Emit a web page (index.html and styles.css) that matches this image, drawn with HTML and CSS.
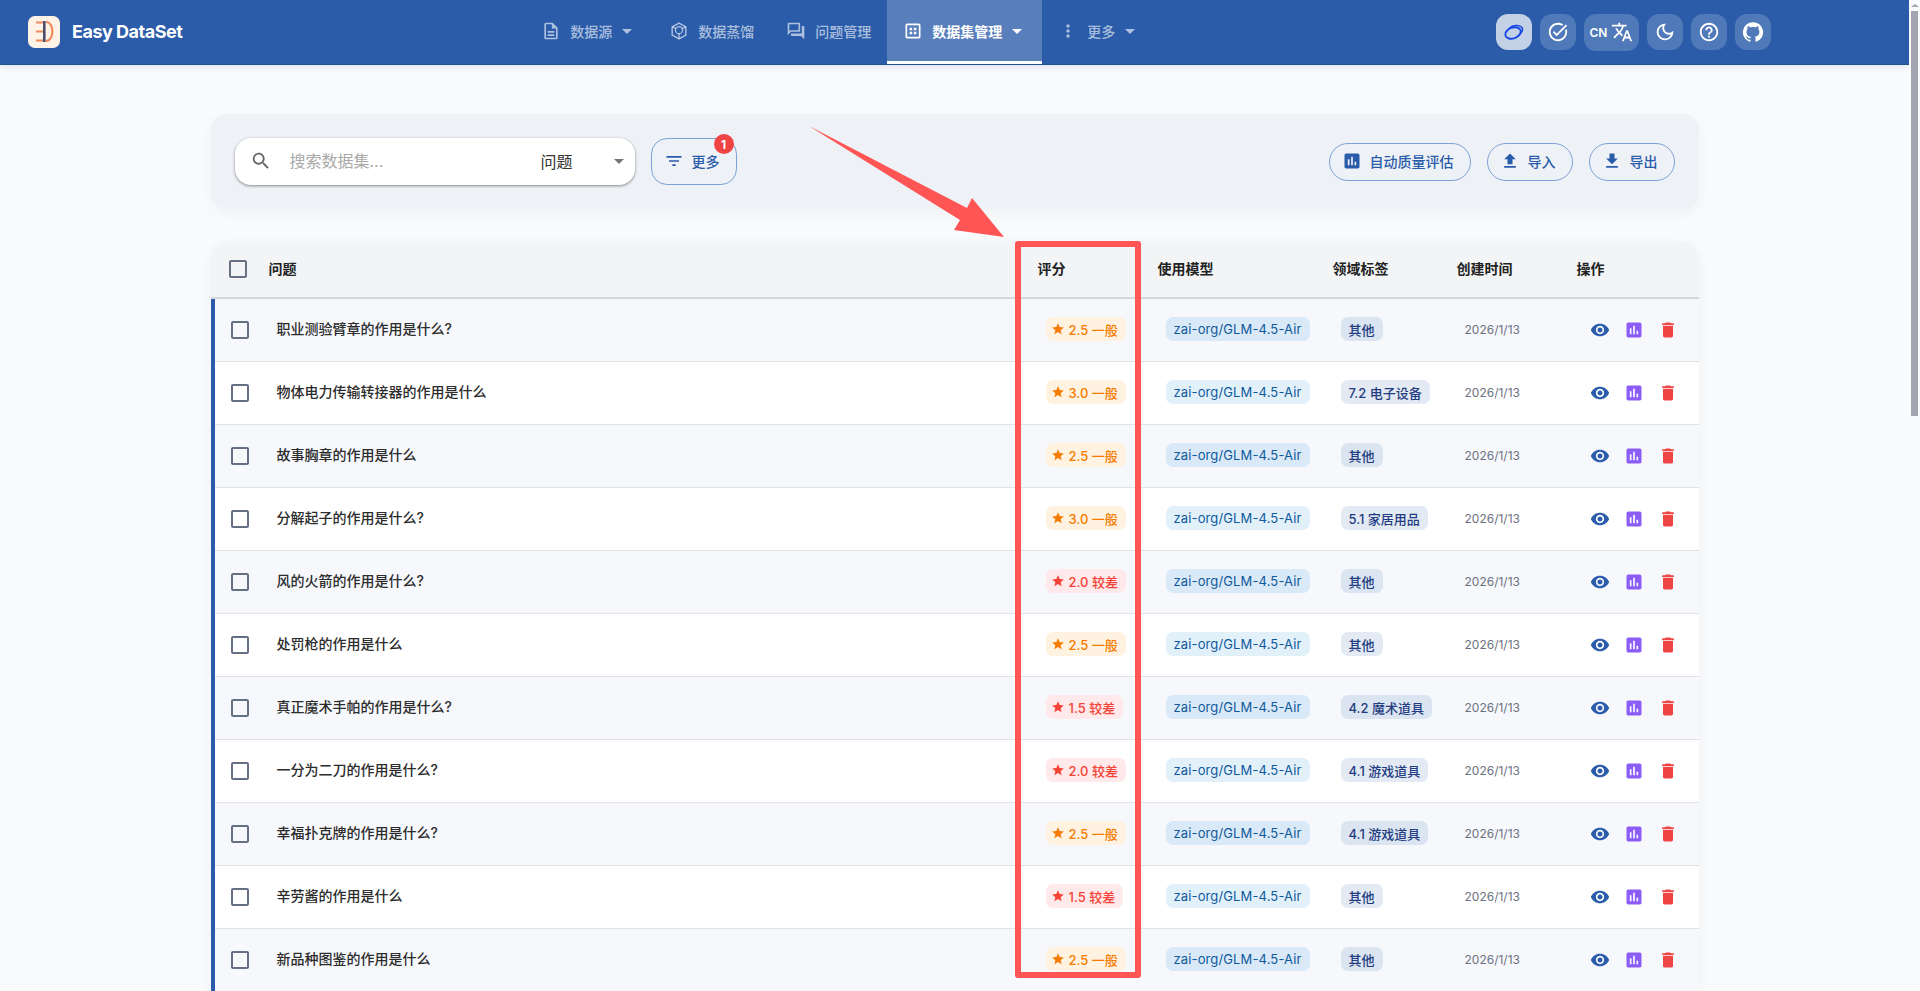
FILE: index.html
```html
<!DOCTYPE html>
<html lang="zh-CN">
<head>
<meta charset="utf-8">
<title>Easy DataSet</title>
<link rel="stylesheet" href="styles.css">
</head>
<body>
<svg class="defs" width="0" height="0" aria-hidden="true">
  <symbol id="i-doc" viewBox="0 0 24 24"><path d="M8 16h8v2H8zm0-4h8v2H8zm6-10H6c-1.1 0-2 .9-2 2v16c0 1.1.89 2 1.99 2H18c1.1 0 2-.9 2-2V8l-6-6zm4 18H6V4h7v5h5v11z"/></symbol>
  <symbol id="i-hex" viewBox="0 0 24 24"><path fill="none" stroke="currentColor" stroke-width="1.7" d="M12 2.5l8.2 4.7v9.6L12 21.5l-8.2-4.7V7.2z"/><circle cx="12" cy="11" r="4.2" fill="none" stroke="currentColor" stroke-width="1.6"/><path fill="none" stroke="currentColor" stroke-width="1.6" d="M12 15v6M8.2 9L4 7M15.8 9L20 7"/></symbol>
  <symbol id="i-qa" viewBox="0 0 24 24"><path d="M15 4v7H5.17L4 12.17V4h11m1-2H3c-.55 0-1 .45-1 1v14l4-4h10c.55 0 1-.45 1-1V3c0-.55-.45-1-1-1zm5 4h-2v9H6v2c0 .55.45 1 1 1h11l4 4V7c0-.55-.45-1-1-1z"/></symbol>
  <symbol id="i-dataset" viewBox="0 0 24 24"><path d="M19 3H5c-1.1 0-2 .9-2 2v14c0 1.1.9 2 2 2h14c1.1 0 2-.9 2-2V5c0-1.1-.9-2-2-2zm0 16H5V5h14v14z"/><path d="M8 8h3v3H8zm5 0h3v3h-3zm-5 5h3v3H8zm5 0h3v3h-3z"/></symbol>
  <symbol id="i-vert" viewBox="0 0 24 24"><path d="M12 8c1.1 0 2-.9 2-2s-.9-2-2-2-2 .9-2 2 .9 2 2 2zm0 2c-1.1 0-2 .9-2 2s.9 2 2 2 2-.9 2-2-.9-2-2-2zm0 6c-1.1 0-2 .9-2 2s.9 2 2 2 2-.9 2-2-.9-2-2-2z"/></symbol>
  <symbol id="i-caret" viewBox="0 0 24 24"><path d="M7 10l5 5 5-5z"/></symbol>
  <symbol id="i-search" viewBox="0 0 24 24"><path d="M15.5 14h-.79l-.28-.27C15.41 12.59 16 11.11 16 9.5 16 5.91 13.09 3 9.5 3S3 5.91 3 9.5 5.91 16 9.5 16c1.61 0 3.09-.59 4.23-1.57l.27.28v.79l5 4.99L20.49 19l-4.99-5zm-6 0C7.01 14 5 11.99 5 9.5S7.01 5 9.5 5 14 7.01 14 9.5 11.99 14 9.5 14z"/></symbol>
  <symbol id="i-filter" viewBox="0 0 24 24"><path d="M10 18h4v-2h-4v2zM3 6v2h18V6H3zm3 7h12v-2H6v2z"/></symbol>
  <symbol id="i-chart" viewBox="0 0 24 24"><path d="M19 3H5c-1.1 0-2 .9-2 2v14c0 1.1.9 2 2 2h14c1.1 0 2-.9 2-2V5c0-1.1-.9-2-2-2zM9 17H7v-7h2v7zm4 0h-2V7h2v10zm4 0h-2v-4h2v4z"/></symbol>
  <symbol id="i-up" viewBox="0 0 24 24"><path d="M9 16h6v-6h4l-7-7-7 7h4zm-4 2h14v2H5z"/></symbol>
  <symbol id="i-down" viewBox="0 0 24 24"><path d="M19 9h-4V3H9v6H5l7 7 7-7zM5 18v2h14v-2H5z"/></symbol>
  <symbol id="i-eye" viewBox="0 0 24 24"><path d="M12 4.5C7 4.5 2.73 7.61 1 12c1.73 4.39 6 7.5 11 7.5s9.27-3.11 11-7.5c-1.73-4.39-6-7.5-11-7.5zM12 17c-2.76 0-5-2.24-5-5s2.24-5 5-5 5 2.24 5 5-2.24 5-5 5zm0-8c-1.66 0-3 1.34-3 3s1.34 3 3 3 3-1.34 3-3-1.34-3-3-3z"/></symbol>
  <symbol id="i-trash" viewBox="0 0 24 24"><path d="M6 19c0 1.1.9 2 2 2h8c1.1 0 2-.9 2-2V7H6v12zM19 4h-3.5l-1-1h-5l-1 1H5v2h14V4z"/></symbol>
  <symbol id="i-star" viewBox="0 0 24 24"><path d="M12 17.27 18.18 21l-1.64-7.03L22 9.24l-7.19-.61L12 2 9.19 8.63 2 9.24l5.46 4.73L5.82 21z"/></symbol>
  <symbol id="i-task" viewBox="0 0 24 24"><path d="M22 5.18 10.59 16.6l-4.24-4.24 1.41-1.41 2.83 2.83 10-10L22 5.18zm-2.21 5.04c.13.57.21 1.17.21 1.78 0 4.42-3.58 8-8 8s-8-3.58-8-8 3.58-8 8-8c1.58 0 3.04.46 4.28 1.25l1.44-1.44C16.1 2.67 14.13 2 12 2 6.48 2 2 6.48 2 12s4.48 10 10 10 10-4.48 10-10c0-1.19-.22-2.33-.6-3.39l-1.61 1.61z"/></symbol>
  <symbol id="i-lang" viewBox="0 0 24 24"><path d="m12.87 15.07-2.54-2.51.03-.03c1.74-1.94 2.98-4.17 3.71-6.53H17V4h-7V2H8v2H1v1.99h11.17C11.5 7.92 10.44 9.75 9 11.35 8.07 10.32 7.3 9.19 6.69 8h-2c.73 1.63 1.73 3.17 2.98 4.56l-5.09 5.02L4 19l5-5 3.11 3.11.76-2.04zM18.5 10h-2L12 22h2l1.12-3h4.75L21 22h2l-4.5-12zm-2.62 7 1.62-4.33L19.12 17h-3.24z"/></symbol>
  <symbol id="i-moon" viewBox="0 0 24 24"><path d="M9.37 5.51c-.18.64-.27 1.31-.27 1.99 0 4.08 3.32 7.4 7.4 7.4.68 0 1.35-.09 1.99-.27C17.45 17.19 14.93 19 12 19c-3.86 0-7-3.14-7-7 0-2.93 1.81-5.45 4.37-6.49zM12 3c-4.97 0-9 4.03-9 9s4.03 9 9 9 9-4.03 9-9c0-.46-.04-.92-.1-1.36-.98 1.37-2.58 2.26-4.4 2.26-2.98 0-5.4-2.42-5.4-5.4 0-1.81.89-3.42 2.26-4.4-.44-.06-.9-.1-1.36-.1z"/></symbol>
  <symbol id="i-help" viewBox="0 0 24 24"><path d="M11 18h2v-2h-2v2zm1-16C6.48 2 2 6.48 2 12s4.48 10 10 10 10-4.48 10-10S17.52 2 12 2zm0 18c-4.41 0-8-3.59-8-8s3.59-8 8-8 8 3.59 8 8-3.59 8-8 8zm0-14c-2.21 0-4 1.79-4 4h2c0-1.1.9-2 2-2s2 .9 2 2c0 2-3 1.75-3 5h2c0-2.25 3-2.5 3-5 0-2.21-1.79-4-4-4z"/></symbol>
  <symbol id="i-github" viewBox="0 0 24 24"><path d="M12 1.27a11 11 0 00-3.48 21.46c.55.09.73-.28.73-.55v-1.84c-3.03.64-3.67-1.46-3.67-1.46-.55-1.29-1.28-1.65-1.28-1.65-.92-.65.1-.65.1-.65 1.1 0 1.73 1.1 1.73 1.1.92 1.65 2.57 1.2 3.21.92a2 2 0 01.64-1.47c-2.47-.27-5.04-1.19-5.04-5.5 0-1.1.46-2.1 1.2-2.84a3.76 3.76 0 010-2.93s.91-.28 3.11 1.1c1.8-.49 3.7-.49 5.5 0 2.1-1.38 3.02-1.1 3.02-1.1a3.76 3.76 0 010 2.93c.83.74 1.2 1.74 1.2 2.94 0 4.21-2.57 5.13-5.04 5.4.45.37.82.92.82 2.02v3.03c0 .27.1.64.73.55A11 11 0 0012 1.27"/></symbol>
  <symbol id="i-box" viewBox="0 0 24 24"><path d="M19 5v14H5V5h14m0-2H5c-1.1 0-2 .9-2 2v14c0 1.1.9 2 2 2h14c1.1 0 2-.9 2-2V5c0-1.1-.9-2-2-2z"/></symbol>
</svg>

<header class="topbar">
  <div class="brand">
    <svg class="logo" viewBox="0 0 32 32" width="32" height="32">
      <rect width="32" height="32" rx="7" fill="#fff3e8"/>
      <path d="M8 6.5h7M8 15.5h7M8 24.5h7" stroke="#f28a5c" stroke-width="2.2" fill="none"/>
      <path d="M18 6c8.5 0 8.5 19 0 19" stroke="#f28a5c" stroke-width="2.2" fill="none"/>
      <rect x="15" y="5" width="2.6" height="21" fill="#4a4f6a"/>
    </svg>
    <span class="brand-name">Easy DataSet</span>
  </div>
  <nav class="nav">
    <a class="nav-item"><svg class="ic20"><use href="#i-doc"/></svg><span>数据源</span><svg class="caret"><use href="#i-caret"/></svg></a>
    <a class="nav-item"><svg class="ic20"><use href="#i-hex"/></svg><span>数据蒸馏</span></a>
    <a class="nav-item"><svg class="ic20"><use href="#i-qa"/></svg><span>问题管理</span></a>
    <a class="nav-item active"><svg class="ic20"><use href="#i-dataset"/></svg><span>数据集管理</span><svg class="caret"><use href="#i-caret"/></svg></a>
    <a class="nav-item"><svg class="ic20"><use href="#i-vert"/></svg><span>更多</span><svg class="caret"><use href="#i-caret"/></svg></a>
  </nav>
  <div class="tools">
    <button class="tool tool-on">
      <svg class="ring" viewBox="0 0 24 24" width="24" height="24"><ellipse cx="11" cy="13" rx="8" ry="5.4" transform="rotate(-20 11 13)" fill="none" stroke="#1747e6" stroke-width="1.9"/><path d="M7.5 7.8c3.5-2.6 9.4-3.2 12-.8 1.7 1.7 1 4-.6 6" fill="none" stroke="#1747e6" stroke-width="1.6"/></svg>
    </button>
    <button class="tool"><svg class="ic22"><use href="#i-task"/></svg></button>
    <button class="tool tool-lang"><span>CN</span><svg class="ic22"><use href="#i-lang"/></svg></button>
    <button class="tool"><svg class="ic22"><use href="#i-moon"/></svg></button>
    <button class="tool"><svg class="ic22"><use href="#i-help"/></svg></button>
    <button class="tool"><svg class="ic22"><use href="#i-github"/></svg></button>
  </div>
</header>

<main class="page">
  <section class="toolbar">
    <div class="filters">
      <div class="search">
        <svg class="ic22 muted"><use href="#i-search"/></svg>
        <input class="search-input" placeholder="搜索数据集...">
        <span class="search-field">问题</span>
        <svg class="search-caret"><use href="#i-caret"/></svg>
      </div>
      <button class="btn btn-more"><svg class="ic20"><use href="#i-filter"/></svg><span>更多</span><b class="badge">1</b></button>
    </div>
    <div class="actions">
      <button class="btn btn-pill"><svg class="ic20"><use href="#i-chart"/></svg><span>自动质量评估</span></button>
      <button class="btn btn-pill"><svg class="ic20"><use href="#i-up"/></svg><span>导入</span></button>
      <button class="btn btn-pill"><svg class="ic20"><use href="#i-down"/></svg><span>导出</span></button>
    </div>
  </section>

  <section class="table-card">
    <table class="grid">
      <colgroup>
        <col class="c-check"><col class="c-q"><col class="c-score"><col class="c-model"><col class="c-domain"><col class="c-date"><col class="c-ops">
      </colgroup>
      <thead>
        <tr>
          <th class="th-check"><svg class="cb"><use href="#i-box"/></svg></th>
          <th class="th-q">问题</th><th>评分</th><th>使用模型</th><th>领域标签</th><th>创建时间</th><th>操作</th>
        </tr>
      </thead>
      <tbody>
        <tr><td class="td-check"><svg class="cb"><use href="#i-box"/></svg></td><td class="td-q">职业测验臂章的作用是什么?</td><td><span class="chip mid"><svg><use href="#i-star"/></svg>2.5 一般</span></td><td><span class="chip model">zai-org/GLM-4.5-Air</span></td><td><span class="chip domain">其他</span></td><td class="date">2026/1/13</td><td class="ops"><svg class="eye"><use href="#i-eye"/></svg><svg class="bar"><use href="#i-chart"/></svg><svg class="del"><use href="#i-trash"/></svg></td></tr>
        <tr><td class="td-check"><svg class="cb"><use href="#i-box"/></svg></td><td class="td-q">物体电力传输转接器的作用是什么</td><td><span class="chip mid"><svg><use href="#i-star"/></svg>3.0 一般</span></td><td><span class="chip model">zai-org/GLM-4.5-Air</span></td><td><span class="chip domain">7.2 电子设备</span></td><td class="date">2026/1/13</td><td class="ops"><svg class="eye"><use href="#i-eye"/></svg><svg class="bar"><use href="#i-chart"/></svg><svg class="del"><use href="#i-trash"/></svg></td></tr>
        <tr><td class="td-check"><svg class="cb"><use href="#i-box"/></svg></td><td class="td-q">故事胸章的作用是什么</td><td><span class="chip mid"><svg><use href="#i-star"/></svg>2.5 一般</span></td><td><span class="chip model">zai-org/GLM-4.5-Air</span></td><td><span class="chip domain">其他</span></td><td class="date">2026/1/13</td><td class="ops"><svg class="eye"><use href="#i-eye"/></svg><svg class="bar"><use href="#i-chart"/></svg><svg class="del"><use href="#i-trash"/></svg></td></tr>
        <tr><td class="td-check"><svg class="cb"><use href="#i-box"/></svg></td><td class="td-q">分解起子的作用是什么?</td><td><span class="chip mid"><svg><use href="#i-star"/></svg>3.0 一般</span></td><td><span class="chip model">zai-org/GLM-4.5-Air</span></td><td><span class="chip domain">5.1 家居用品</span></td><td class="date">2026/1/13</td><td class="ops"><svg class="eye"><use href="#i-eye"/></svg><svg class="bar"><use href="#i-chart"/></svg><svg class="del"><use href="#i-trash"/></svg></td></tr>
        <tr><td class="td-check"><svg class="cb"><use href="#i-box"/></svg></td><td class="td-q">风的火箭的作用是什么?</td><td><span class="chip low"><svg><use href="#i-star"/></svg>2.0 较差</span></td><td><span class="chip model">zai-org/GLM-4.5-Air</span></td><td><span class="chip domain">其他</span></td><td class="date">2026/1/13</td><td class="ops"><svg class="eye"><use href="#i-eye"/></svg><svg class="bar"><use href="#i-chart"/></svg><svg class="del"><use href="#i-trash"/></svg></td></tr>
        <tr><td class="td-check"><svg class="cb"><use href="#i-box"/></svg></td><td class="td-q">处罚枪的作用是什么</td><td><span class="chip mid"><svg><use href="#i-star"/></svg>2.5 一般</span></td><td><span class="chip model">zai-org/GLM-4.5-Air</span></td><td><span class="chip domain">其他</span></td><td class="date">2026/1/13</td><td class="ops"><svg class="eye"><use href="#i-eye"/></svg><svg class="bar"><use href="#i-chart"/></svg><svg class="del"><use href="#i-trash"/></svg></td></tr>
        <tr><td class="td-check"><svg class="cb"><use href="#i-box"/></svg></td><td class="td-q">真正魔术手帕的作用是什么?</td><td><span class="chip low"><svg><use href="#i-star"/></svg>1.5 较差</span></td><td><span class="chip model">zai-org/GLM-4.5-Air</span></td><td><span class="chip domain">4.2 魔术道具</span></td><td class="date">2026/1/13</td><td class="ops"><svg class="eye"><use href="#i-eye"/></svg><svg class="bar"><use href="#i-chart"/></svg><svg class="del"><use href="#i-trash"/></svg></td></tr>
        <tr><td class="td-check"><svg class="cb"><use href="#i-box"/></svg></td><td class="td-q">一分为二刀的作用是什么?</td><td><span class="chip low"><svg><use href="#i-star"/></svg>2.0 较差</span></td><td><span class="chip model">zai-org/GLM-4.5-Air</span></td><td><span class="chip domain">4.1 游戏道具</span></td><td class="date">2026/1/13</td><td class="ops"><svg class="eye"><use href="#i-eye"/></svg><svg class="bar"><use href="#i-chart"/></svg><svg class="del"><use href="#i-trash"/></svg></td></tr>
        <tr><td class="td-check"><svg class="cb"><use href="#i-box"/></svg></td><td class="td-q">幸福扑克牌的作用是什么?</td><td><span class="chip mid"><svg><use href="#i-star"/></svg>2.5 一般</span></td><td><span class="chip model">zai-org/GLM-4.5-Air</span></td><td><span class="chip domain">4.1 游戏道具</span></td><td class="date">2026/1/13</td><td class="ops"><svg class="eye"><use href="#i-eye"/></svg><svg class="bar"><use href="#i-chart"/></svg><svg class="del"><use href="#i-trash"/></svg></td></tr>
        <tr><td class="td-check"><svg class="cb"><use href="#i-box"/></svg></td><td class="td-q">辛劳酱的作用是什么</td><td><span class="chip low"><svg><use href="#i-star"/></svg>1.5 较差</span></td><td><span class="chip model">zai-org/GLM-4.5-Air</span></td><td><span class="chip domain">其他</span></td><td class="date">2026/1/13</td><td class="ops"><svg class="eye"><use href="#i-eye"/></svg><svg class="bar"><use href="#i-chart"/></svg><svg class="del"><use href="#i-trash"/></svg></td></tr>
        <tr><td class="td-check"><svg class="cb"><use href="#i-box"/></svg></td><td class="td-q">新品种图鉴的作用是什么</td><td><span class="chip mid"><svg><use href="#i-star"/></svg>2.5 一般</span></td><td><span class="chip model">zai-org/GLM-4.5-Air</span></td><td><span class="chip domain">其他</span></td><td class="date">2026/1/13</td><td class="ops"><svg class="eye"><use href="#i-eye"/></svg><svg class="bar"><use href="#i-chart"/></svg><svg class="del"><use href="#i-trash"/></svg></td></tr>
      </tbody>
    </table>
  </section>
</main>

<div class="callout-box"></div>
<svg class="callout-arrow" viewBox="0 0 220 130" width="220" height="130">
  <polygon points="-1,6 157,88 162,78 194,117 144,110 150,100"/>
</svg>
<div class="scroll-rail"><i class="scroll-up"></i><i class="scroll-thumb"></i></div>
</body>
</html>
```

FILE: styles.css
```css
* { box-sizing: border-box; }
html { background: #f8fafc; scrollbar-width: none; }
body {
  margin: 0;
  padding-right: 11px;
  min-height: 2371px;
  position: relative;
  font-family: Inter, "Noto Sans CJK SC", sans-serif;
  color: #222;
  background: #f8fafc;
}
svg { fill: currentColor; flex: none; display: block; }
.defs { position: absolute; }
.ic20 { width: 20px; height: 20px; }
.ic22 { width: 22px; height: 22px; }
.muted { color: #666; }

.topbar {
  height: 65px;
  background: #2a5caa;
  border-bottom: 1px solid #23508f;
  box-shadow: 0 2px 6px rgba(42, 92, 170, .12);
  display: flex;
  align-items: stretch;
  padding: 0 138px 0 28px;
  color: #fff;
}
.brand { display: flex; align-items: center; gap: 12px; }
.logo { margin-top: -1px; }
.brand-name { font-size: 18px; font-weight: 700; letter-spacing: -.5px; padding-bottom: 1px; }
.nav { display: flex; margin-left: 343px; }
.nav-item {
  display: flex;
  align-items: center;
  gap: 9px;
  padding: 0 16px 2px;
  font-size: 14px;
  font-weight: 500;
  white-space: nowrap;
  color: rgba(255, 255, 255, .62);
}
.caret { width: 24px; height: 24px; margin: 0 -2px 0 -6px; }
.nav-item.active {
  background: rgba(255, 255, 255, .22);
  color: #fff;
  font-weight: 700;
  position: relative;
  padding-right: 15px;
}
.nav-item.active::after {
  content: "";
  position: absolute;
  left: 0;
  right: 0;
  bottom: 0;
  height: 3px;
  background: #fff;
}
.tools { margin-left: auto; display: flex; align-items: center; gap: 8px; }
.tool {
  width: 36px;
  height: 36px;
  border: 0;
  padding: 0;
  border-radius: 12px;
  background: rgba(255, 255, 255, .18);
  color: #fff;
  display: flex;
  align-items: center;
  justify-content: center;
  font: inherit;
}
.tool-on { background: rgba(255, 255, 255, .72); }
.tool-lang { width: 55px; height: 37px; gap: 4px; font-size: 12px; font-weight: 600; }

.page { max-width: 1488px; margin: 0 auto; padding-top: 49px; }
.toolbar {
  height: 95px;
  padding: 24px;
  border-radius: 16px;
  background: #eef1f6;
  box-shadow: 0 4px 14px rgba(0, 0, 0, .04);
  display: flex;
  justify-content: space-between;
  align-items: flex-start;
}
.filters { display: flex; gap: 16px; }
.search {
  width: 400px;
  height: 47px;
  background: #fff;
  border-radius: 16px;
  box-shadow: 0 1px 3px rgba(0, 0, 0, .45);
  display: flex;
  align-items: center;
  padding: 0 0 1px 15px;
}
.search-input {
  border: 0;
  outline: 0;
  background: none;
  width: 251px;
  margin-left: 18px;
  padding: 0;
  font: 16px Inter, "Noto Sans CJK SC", sans-serif;
}
.search-input::placeholder { color: #a9a9a9; opacity: 1; }
.search-field { font-size: 16px; color: #333; width: 66px; }
.search-caret { width: 24px; height: 24px; color: #757575; }
.btn {
  border: 1px solid #7fa2d6;
  background: none;
  color: #2a5caa;
  font: 500 14px Inter, "Noto Sans CJK SC", sans-serif;
  display: flex;
  align-items: center;
  gap: 8px;
  padding: 0 16px 2px 12px;
  position: relative;
}
.btn-more { height: 47px; border-radius: 16px; }
.btn-pill { height: 38px; border-radius: 19px; margin-top: 5px; }
.actions { display: flex; gap: 16px; }
.badge {
  position: absolute;
  top: -5px;
  right: 2px;
  width: 20px;
  height: 20px;
  border-radius: 50%;
  background: #ef4444;
  color: #fff;
  font-size: 12px;
  font-weight: 700;
  display: flex;
  align-items: center;
  justify-content: center;
}

.table-card {
  margin-top: 32px;
  border-radius: 16px 16px 0 0;
  overflow: hidden;
  background: #fff;
  box-shadow: 0 4px 14px rgba(0, 0, 0, .04);
}
.grid { width: 100%; border-collapse: separate; border-spacing: 0; table-layout: fixed; }
.c-check { width: 50px; }
.c-score { width: 120px; }
.c-model { width: 175px; }
.c-domain { width: 124px; }
.c-date { width: 120px; }
.c-ops { width: 138px; }
.grid th {
  height: 58px;
  background: #f3f4f6;
  border-bottom: 2px solid #d5d7dc;
  font-size: 14px;
  font-weight: 700;
  text-align: left;
  padding: 0 0 3px 16px;
  color: #222;
}
.grid th.th-check { padding: 0 0 1px 15px; }
.grid th.th-q { padding-left: 8px; }
.grid td {
  height: 63px;
  padding: 0 0 2px 24px;
  border-bottom: 1px solid #e0e2e6;
  font-size: 14px;
  background: #fff;
}
.grid tbody tr:nth-child(odd) td { background: #f6f8fc; }
.grid td.td-check { padding: 0 0 0 17px; position: relative; }
.td-check::before {
  content: "";
  position: absolute;
  left: 0;
  top: 0;
  bottom: -1px;
  width: 4px;
  background: #2a5caa;
}
.grid td.td-q { padding: 0 0 5px 16px; font-weight: 500; color: #2c2c2c; }
.cb { width: 24px; height: 24px; color: #667085; }
.chip {
  display: inline-flex;
  align-items: center;
  height: 24px;
  border-radius: 7px;
  padding: 0 8px;
  font-size: 13px;
  white-space: nowrap;
  vertical-align: middle;
}
.chip svg { width: 14px; height: 14px; margin-right: 4px; }
.mid { background: #fff2e0; color: #f57c00; padding-left: 5px; font-weight: 500; }
.low { background: #ffe9ea; color: #f44336; padding-left: 5px; font-weight: 500; }
.model { background: rgba(14, 130, 210, .12); color: #0f5a9c; letter-spacing: .13px; }
.domain { background: rgba(42, 92, 170, .13); color: #1f3d80; font-weight: 500; }
.grid td.date { font-size: 12px; color: #6b7280; }
.grid td.ops { padding: 0 0 0 29px; font-size: 0; }
.ops svg { display: inline-block; width: 20px; height: 20px; margin-right: 14px; vertical-align: middle; }
.eye { color: #2a5caa; }
.bar { color: #8b5cf6; }
.del { color: #ef4444; }

.callout-box {
  position: absolute;
  left: 1015px;
  top: 241px;
  width: 126px;
  height: 737px;
  border: 6px solid #ff5555;
  border-radius: 3px;
}
.callout-arrow { position: absolute; left: 810px; top: 120px; fill: #ff5555; overflow: visible; }

.scroll-rail {
  position: fixed;
  top: 0;
  right: 0;
  bottom: 0;
  width: 11px;
  background: #f8fafc;
}
.scroll-up {
  display: block;
  width: 0;
  margin: 4px 0 0 2px;
  border: 4px solid transparent;
  border-top: 0;
  border-bottom: 3px solid #a1a5b0;
}
.scroll-thumb {
  display: block;
  width: 7px;
  height: 405px;
  margin: 4px 0 0 2px;
  background: #a1a5b0;
}
```
